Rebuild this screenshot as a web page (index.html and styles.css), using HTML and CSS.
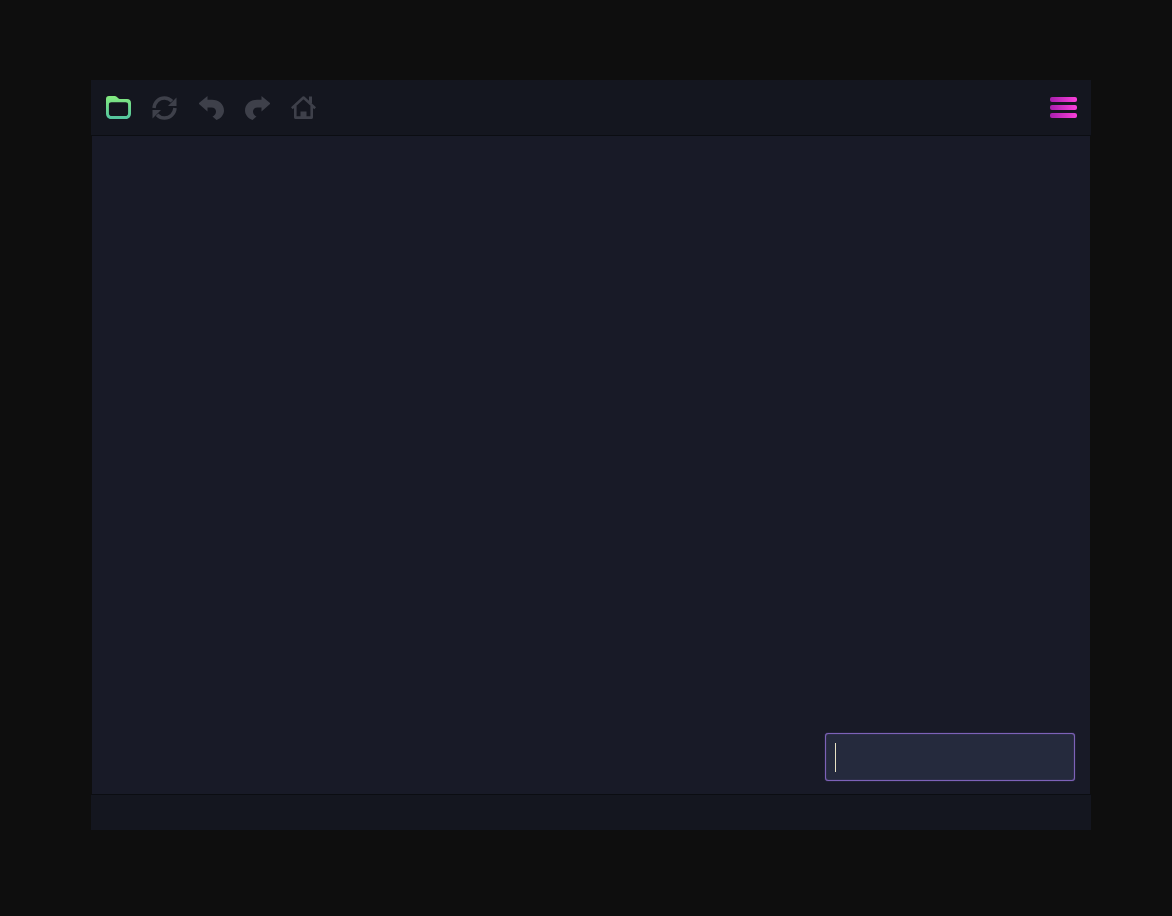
FILE: index.html
```html
<!DOCTYPE html>
<html lang="en">
<head>
<meta charset="utf-8">
<title>Browser</title>
<link rel="stylesheet" href="styles.css">
</head>
<body>
<div class="window">
  <header class="toolbar">
    <div class="tools">
      <svg class="icon" viewBox="0 0 25 24" aria-label="Open folder">
        <defs><linearGradient id="fg" x1="0" y1="0" x2="0" y2="1"><stop offset="0" stop-color="#84ea7e"/><stop offset="1" stop-color="#52c4a0"/></linearGradient></defs>
        <path fill="url(#fg)" fill-rule="evenodd" d="M3 0H9C11 0 11.500 2.500 13.500 3H21C23.500 3 25 4.500 25 7V17.500C25 20.500 23 23 20 23H5C2 23 0 20.500 0 17.500V3C0 1 1 0 3 0ZM5.500 6.300C3.700 6.300 2.900 7.100 2.900 8.500V17.200C2.900 19 4 20.100 5.800 20.100H19.200C21 20.100 22.100 19 22.100 17.200V8.500C22.100 7.100 21.300 6.300 19.500 6.300Z"/>
      </svg>
      <svg class="icon" viewBox="0 0 25 24" aria-label="Reload">
        <g fill="none" stroke="#3e404a" stroke-width="3.500">
          <path d="M2 12C2.500 6.200 7 2 12.500 2C15.500 2 18 3.200 20 5.300"/>
          <path d="M23 12C22.500 17.800 18 22 12.500 22C9.500 22 7 20.800 5 18.700"/>
        </g>
        <path fill="#3e404a" d="M24.500 1.500V10H16Z"/>
        <path fill="#3e404a" d="M0.500 22.500V14H9Z"/>
      </svg>
      <svg class="icon" viewBox="0 0 25 24" aria-label="Back">
        <path fill="#3e404a" d="M-0.500 7.500L8.500 0V3.800H13C20 3.800 25 8.500 25 14.500C25 18.500 22 22.500 17.500 24L13.500 20.500C15.500 19.500 17 18 17 15.500C17 13 15 11.500 12.500 11.500H8.500V15.500Z"/>
      </svg>
      <svg class="icon" viewBox="0 0 25 24" aria-label="Forward">
        <path fill="#3e404a" d="M25.500 7.500L16.500 0V3.800H12C5 3.800 0 8.500 0 14.500C0 18.500 3 22.500 7.500 24L11.500 20.500C9.500 19.500 8 18 8 15.500C8 13 10 11.500 12.500 11.500H16.500V15.500Z"/>
      </svg>
      <svg class="icon" viewBox="0 0 25 24" aria-label="Home">
        <path fill="none" stroke="#3e404a" stroke-width="2.600" stroke-linejoin="round" d="M0.800 12.200L12.500 1.500L24.200 12.200M4.300 10V21.600H20.700V10"/>
        <path fill="#3e404a" d="M9.500 15.500H15.500V22H9.500ZM18 0.500H21V7H18Z"/>
      </svg>
    </div>
    <button class="menu" aria-label="Menu">
      <span class="bar"></span>
      <span class="bar"></span>
      <span class="bar"></span>
    </button>
  </header>
  <main class="content">
    <div class="prompt"><span class="caret"></span></div>
  </main>
  <footer class="status"></footer>
</div>
</body>
</html>
```
FILE: styles.css
```css
* { box-sizing: border-box; }
html, body { height: 100%; }
body {
  margin: 0;
  padding: 80px 0 0 91px;
  background: #0e0e0e;
  overflow: hidden;
}
.window {
  width: 1000px;
  height: 750px;
  display: flex;
  flex-direction: column;
}
.toolbar {
  height: 56px;
  flex: none;
  display: flex;
  align-items: center;
  justify-content: space-between;
  padding: 0 14px 0 15px;
  background: #14161f;
  border-bottom: 1px solid #0b0d12;
}
.tools {
  display: flex;
  align-items: center;
  gap: 21.250px;
}
.icon {
  display: block;
  width: 25px;
  height: 24px;
  filter: blur(0.3px);
}
.menu {
  display: flex;
  flex-direction: column;
  gap: 3px;
  width: 27px;
  padding: 0;
  border: 0;
  background: none;
  filter: blur(0.25px);
}
.bar {
  display: block;
  height: 5px;
  width: 27px;
  border-radius: 2px;
  background: linear-gradient(90deg, #a81fae, #fb40da);
}
.content {
  flex: 1;
  margin: 0 1px;
  background: #181a27;
  display: flex;
  align-items: flex-end;
  justify-content: flex-end;
  padding: 0 15px 13px 0;
}
.prompt {
  width: 250px;
  height: 48px;
  background: #252a3d;
  border: 1px solid #7d62b8;
  border-radius: 3px;
  box-shadow: 0 0 1px #7d62b8, inset 0 0 1px #7d62b8;
  padding: 9px;
  display: flex;
}
.caret {
  display: block;
  width: 1px;
  height: 29px;
  background: #e8e2c4;
}
.status {
  height: 36px;
  flex: none;
  background: #14161f;
  border-top: 1px solid #0b0d12;
}
```
